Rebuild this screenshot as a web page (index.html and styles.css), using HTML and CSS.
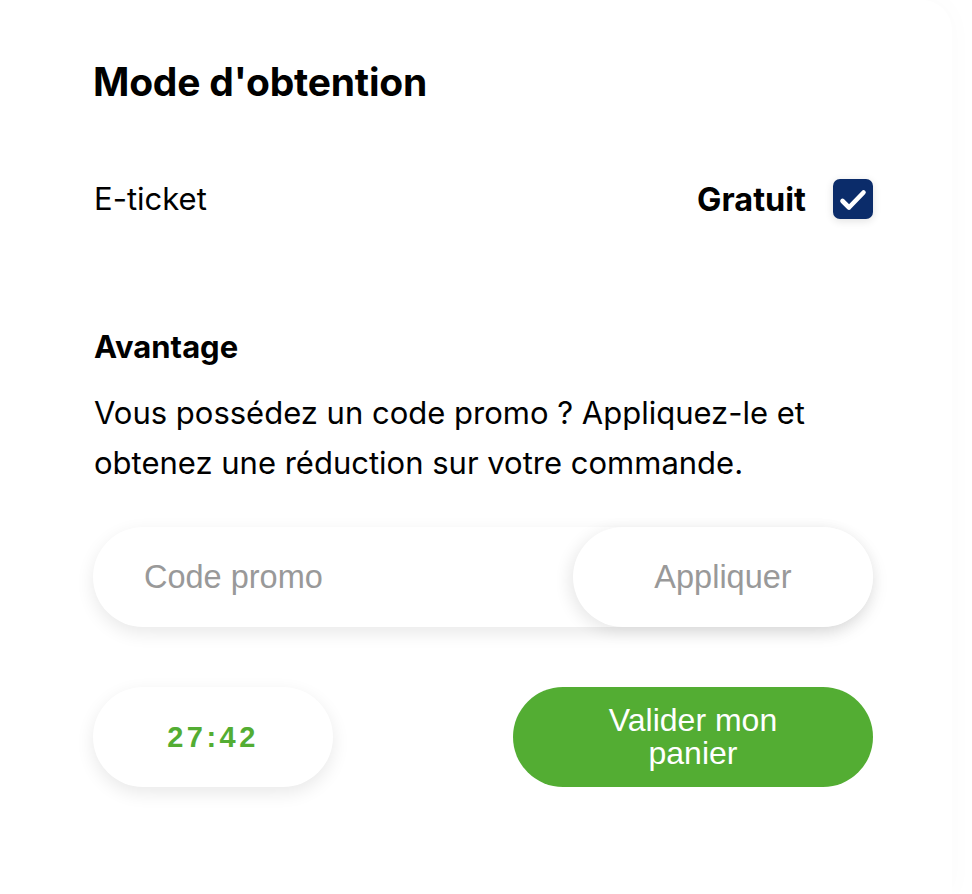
FILE: index.html
```html
<!DOCTYPE html>
<html lang="fr">
<head>
    <meta charset="UTF-8">
    <meta name="viewport" content="width=device-width, initial-scale=1.0">
    <title>Mode d'obtention</title>
    <link rel="stylesheet" href="styles.css">
</head>
<body>
    <div class="panel">
        <div class="content">
            <h2 class="section-title">Mode d'obtention</h2>

            <div class="delivery-row">
                <span class="delivery-name">E-ticket</span>
                <div class="delivery-right">
                    <span class="delivery-price">Gratuit</span>
                    <span class="check">
                        <svg viewBox="0 0 40 40" width="40" height="40">
                            <path d="M9.5 22 L16 28.5 L30.5 13.5" fill="none" stroke="#fff" stroke-width="4.6" stroke-linecap="round" stroke-linejoin="round"/>
                        </svg>
                    </span>
                </div>
            </div>

            <h3 class="sub-title">Avantage</h3>
            <p class="promo-text">Vous possédez un code promo ? Appliquez-le et obtenez une réduction sur votre commande.</p>

            <div class="promo-field">
                <input type="text" class="promo-input" placeholder="Code promo">
                <button class="promo-btn">Appliquer</button>
            </div>

            <div class="actions">
                <div class="timer">27:42</div>
                <button class="btn-validate"><span class="btn-label">Valider mon panier</span></button>
            </div>
        </div>
    </div>
</body>
</html>
```

FILE: styles.css
```css
:root {
    --text: #000000;
    --muted: #999999;
    --green: #53ad33;
    --navy: #0b2c6a;
    --white: #ffffff;
    --shadow: 0 6px 18px rgba(0, 0, 0, 0.09);
}

* {
    margin: 0;
    padding: 0;
    box-sizing: border-box;
}

body {
    font-family: Inter, "Liberation Sans", Arial, sans-serif;
    color: var(--text);
    background: #ffffff;
    min-height: 100vh;
    overflow: hidden;
}

.panel {
    width: 952px;
    min-height: 894px;
    background: var(--white);
    border-top-right-radius: 30px;
    box-shadow: 0 0 28px rgba(0, 0, 0, 0.025);
}

.content {
    width: 780px;
    margin-left: 93px;
    padding-top: 58px;
}

.section-title {
    font-size: 39px;
    font-weight: 700;
    line-height: 48px;
    letter-spacing: -0.2px;
}

.delivery-row {
    display: flex;
    justify-content: space-between;
    align-items: center;
    margin-top: 73px;
}

.delivery-name {
    font-size: 31px;
    line-height: 40px;
    padding-left: 1px;
}

.delivery-right {
    display: flex;
    align-items: center;
    gap: 27px;
}

.delivery-price {
    font-size: 32.5px;
    font-weight: 700;
}

.check {
    width: 40px;
    height: 40px;
    background: var(--navy);
    border-radius: 7px;
    display: flex;
    align-items: center;
    justify-content: center;
    box-shadow: 0 2px 8px rgba(0, 0, 0, 0.12);
}

.sub-title {
    font-size: 31px;
    font-weight: 700;
    line-height: 40px;
    margin-top: 108px;
    padding-left: 1px;
}

.promo-text {
    font-size: 31px;
    line-height: 50px;
    margin-top: 21px;
    padding-left: 1px;
}

.promo-field {
    display: flex;
    height: 100px;
    margin-top: 39px;
    background: var(--white);
    border-radius: 50px;
    box-shadow: var(--shadow);
}

.promo-input {
    flex: 1;
    border: none;
    outline: none;
    background: transparent;
    padding-left: 51px;
    font-family: "Liberation Sans", Arial, sans-serif;
    font-size: 32.5px;
    color: var(--text);
}

.promo-input::placeholder {
    color: var(--muted);
}

.promo-btn {
    width: 300px;
    border: none;
    border-radius: 50px;
    background: var(--white);
    box-shadow: -4px 4px 16px rgba(0, 0, 0, 0.09);
    font-family: "Liberation Sans", Arial, sans-serif;
    font-size: 32.5px;
    color: var(--muted);
    cursor: pointer;
}

.actions {
    display: flex;
    justify-content: space-between;
    margin-top: 60px;
}

.timer {
    width: 240px;
    height: 100px;
    border-radius: 50px;
    background: var(--white);
    box-shadow: var(--shadow);
    display: flex;
    align-items: center;
    justify-content: center;
    font-family: "Liberation Sans", Arial, sans-serif;
    font-weight: 700;
    font-size: 29px;
    letter-spacing: 3.5px;
    color: var(--green);
}

.btn-validate {
    width: 360px;
    height: 100px;
    border: none;
    border-radius: 50px;
    background: var(--green);
    color: var(--white);
    font-family: "Liberation Sans", Arial, sans-serif;
    font-size: 32px;
    line-height: 33px;
    cursor: pointer;
}

.btn-label {
    display: inline-block;
    width: 190px;
}
```
